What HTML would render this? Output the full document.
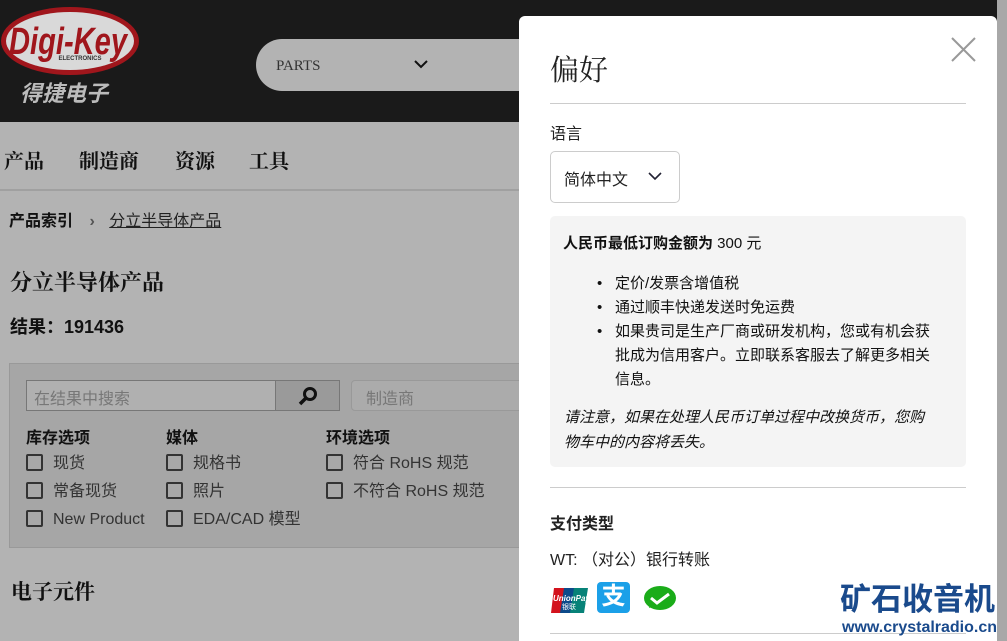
<!DOCTYPE html>
<html><head><meta charset="utf-8"><style>
*{margin:0;padding:0;box-sizing:border-box}
body{width:1007px;height:641px;overflow:hidden;position:relative;background:#b3b3b3;font-family:"Liberation Sans","Noto Sans CJK SC",sans-serif;color:#111}
.a{position:absolute;white-space:nowrap}
.hdr{left:0;top:0;width:1007px;height:122px;background:#1a1a1a}
.cb{width:17px;height:17px;border:2px solid #333;border-radius:2px;display:inline-block;vertical-align:-3px;margin-right:10px;background:#a8a8a8}
.fl{font-size:16px;color:#333}
.fl div{height:28px;line-height:28px}
.fl .fh{font-weight:bold;font-size:16px;color:#111;height:22px;line-height:22px}
.panel{left:519px;top:16px;width:478px;height:625px;background:#fff;border-radius:6px 6px 0 0}
.nav{top:145px;font-size:20px;font-weight:bold;font-family:'Noto Serif CJK SC',serif}
</style></head><body>
<div class="a hdr"></div>
<svg class="a" style="left:0;top:4px" width="145" height="104" viewBox="0 0 145 104">
<ellipse cx="70" cy="37" rx="69" ry="34" fill="#a0161c"/>
<ellipse cx="70" cy="37" rx="64" ry="29" fill="#d9d9d9"/>
<text x="68" y="50" text-anchor="middle" font-family="Liberation Sans Narrow, Liberation Sans" font-weight="bold" font-style="italic" font-size="38" fill="#a0161c" textLength="118" lengthAdjust="spacingAndGlyphs">Digi-Key</text>
<text x="80" y="56" text-anchor="middle" font-family="Liberation Sans" font-weight="bold" font-size="6" fill="#333">ELECTRONICS</text>
<text x="20" y="97" font-family="Noto Sans CJK SC" font-weight="bold" font-style="italic" font-size="22" fill="#bbb">得捷电子</text>
</svg>
<div class="a" style="left:256px;top:39px;width:280px;height:52px;background:#b3b3b3;border-radius:26px 0 0 26px"></div>
<div class="a" style="left:276px;top:58px;font-family:'Liberation Serif','Noto Serif CJK SC',serif;font-size:15px;color:#333">PARTS</div>
<svg class="a" style="left:413px;top:58px" width="16" height="12"><path d="M2 3l6 6 6-6" stroke="#111" stroke-width="2" fill="none"/></svg>
<div class="a nav" style="left:4px">产品</div>
<div class="a nav" style="left:79px">制造商</div>
<div class="a nav" style="left:175px">资源</div>
<div class="a nav" style="left:249px">工具</div>
<div class="a" style="left:0;top:189px;width:519px;height:2px;background:#a0a0a0"></div>
<div class="a" style="left:9px;top:207px;font-size:16px;font-weight:bold">产品索引 <span style="color:#555;margin:0 10px 0 12px">›</span> <span style="font-weight:normal;text-decoration:underline;color:#222">分立半导体产品</span></div>
<div class="a" style="left:10px;top:266px;font-size:22px;font-weight:bold;font-family:'Noto Serif CJK SC',serif">分立半导体产品</div>
<div class="a" style="left:10px;top:313px;font-size:18px;font-weight:bold">结果：191436</div>
<div class="a" style="left:9px;top:363px;width:520px;height:185px;background:#a6a6a6;border:1px solid #999"></div>
<div class="a" style="left:26px;top:380px;width:250px;height:31px;border:1px solid #777;background:#b0b0b0;font-size:16px;color:#777;padding:4px 7px">在结果中搜索</div>
<div class="a" style="left:275px;top:380px;width:65px;height:31px;border:1px solid #777;background:#9a9a9a"></div>
<svg class="a" style="left:297px;top:385px" width="22" height="22"><circle cx="13" cy="9" r="5.5" stroke="#111" stroke-width="3" fill="none"/><path d="M9 13l-6 6" stroke="#111" stroke-width="3.5"/></svg>
<div class="a" style="left:351px;top:380px;width:170px;height:31px;border:1px solid #999;border-radius:4px 0 0 4px;background:#ababab;font-size:16px;color:#777;padding:4px 14px">制造商</div>
<div class="a fl" style="left:26px;top:428px"><div class="fh">库存选项</div><div><span class="cb"></span>现货</div><div><span class="cb"></span>常备现货</div><div><span class="cb"></span>New Product</div></div>
<div class="a fl" style="left:166px;top:428px"><div class="fh">媒体</div><div><span class="cb"></span>规格书</div><div><span class="cb"></span>照片</div><div><span class="cb"></span>EDA/CAD 模型</div></div>
<div class="a fl" style="left:326px;top:428px"><div class="fh">环境选项</div><div><span class="cb"></span>符合 RoHS 规范</div><div><span class="cb"></span>不符合 RoHS 规范</div></div>
<div class="a" style="left:11px;top:576px;font-size:21px;font-weight:bold;font-family:'Noto Serif CJK SC',serif">电子元件</div>
<div class="a" style="left:997px;top:0;width:10px;height:641px;background:#a8a8a8"></div>

<div class="a panel"></div>
<svg class="a" style="left:951px;top:37px" width="25" height="25"><path d="M1 1l23 23M24 1L1 24" stroke="#999" stroke-width="2"/></svg>
<div class="a" style="left:550px;top:48px;font-size:29px;font-family:'Noto Serif CJK SC',serif;color:#222">偏好</div>
<div class="a" style="left:550px;top:103px;width:416px;height:1px;background:#ccc"></div>
<div class="a" style="left:550px;top:120px;font-size:16px;color:#222">语言</div>
<div class="a" style="left:550px;top:151px;width:130px;height:52px;border:1px solid #ccc;border-radius:5px"></div>
<div class="a" style="left:564px;top:166px;font-size:16px;color:#222">简体中文</div>
<svg class="a" style="left:647px;top:170px" width="16" height="12"><path d="M2 3l6 6 6-6" stroke="#223" stroke-width="1.6" fill="none"/></svg>
<div class="a" style="left:550px;top:216px;width:416px;height:251px;background:#f4f4f4;border-radius:5px"></div>
<div class="a" style="left:563px;top:232px;font-size:15px;color:#111"><b>人民币最低订购金额为</b> 300 元</div>
<div class="a" style="left:597px;top:272px;font-size:15px;line-height:24px;color:#111">
<div><span style="display:inline-block;width:18px">•</span>定价/发票含增值税</div>
<div><span style="display:inline-block;width:18px">•</span>通过顺丰快递发送时免运费</div>
<div><span style="display:inline-block;width:18px">•</span>如果贵司是生产厂商或研发机构，您或有机会获</div>
<div style="padding-left:18px">批成为信用客户。立即联系客服去了解更多相关</div>
<div style="padding-left:18px">信息。</div></div>
<div class="a" style="left:564px;top:405px;font-size:15px;line-height:25px;font-style:italic;color:#111">请注意，如果在处理人民币订单过程中改换货币，您购<br>物车中的内容将丢失。</div>
<div class="a" style="left:550px;top:487px;width:416px;height:1px;background:#ccc"></div>
<div class="a" style="left:550px;top:510px;font-size:16px;font-weight:bold;color:#222">支付类型</div>
<div class="a" style="left:550px;top:546px;font-size:16px;color:#222">WT: （对公）银行转账</div>
<svg class="a" style="left:550px;top:582px" width="40" height="34"><path d="M4 6h12l-4 25H1z" fill="#d3121d"/><path d="M14 6h12l-4 25H10z" fill="#0c4a8a"/><path d="M24 6h14l-4 25H20z" fill="#078278"/><text x="3" y="19" font-size="8" font-weight="bold" font-style="italic" fill="#fff" font-family="Liberation Sans">UnionPay</text><text x="12" y="27" font-size="7" fill="#fff">银联</text></svg>
<div class="a" style="left:597px;top:582px;width:33px;height:31px;background:#1ba0e8;border-radius:4px;color:#fff;font-size:24px;line-height:30px;text-align:center;font-weight:bold">支</div>
<svg class="a" style="left:643px;top:585px" width="34" height="28"><ellipse cx="17" cy="13" rx="16" ry="12" fill="#1aac19"/><path d="M6 23l2-6 5 4z" fill="#1aac19"/><path d="M8 13l6 5 12-9" stroke="#fff" stroke-width="3" fill="none"/></svg>
<div class="a" style="left:550px;top:633px;width:416px;height:1px;background:#ccc"></div>
<div class="a" style="left:840px;top:578px;font-size:31px;font-weight:bold;color:#1a4a8c;font-family:'Noto Sans CJK SC',sans-serif;line-height:38px">矿石收音机</div>
<div class="a" style="left:842px;top:619px;font-size:16px;font-weight:bold;color:#1a4a8c">www.crystalradio.cn</div>
</body></html>
